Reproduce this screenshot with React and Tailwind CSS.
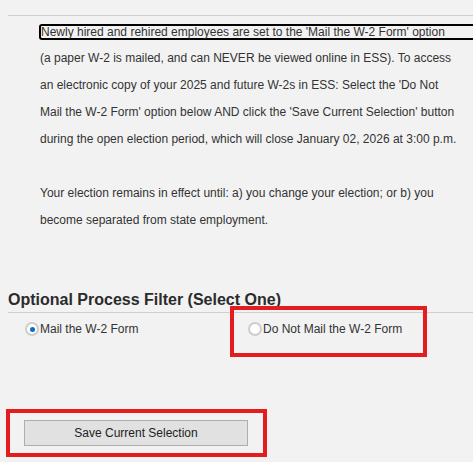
import React from "react";

const lines = [
  "(a paper W-2 is mailed, and can NEVER be viewed online in ESS). To access",
  "an electronic copy of your 2025 and future W-2s in ESS: Select the 'Do Not",
  "Mail the W-2 Form' option below AND click the 'Save Current Selection' button",
  "during the open election period, which will close January 02, 2026 at 3:00 p.m.",
  "",
  "Your election remains in effect until: a) you change your election; or b) you",
  "become separated from state employment.",
];

const Radio = ({ checked }) => (
  <span className="flex items-center justify-center w-[14px] h-[14px] rounded-full border-2 border-[#cdcdcd] bg-white shrink-0">
    {checked && <span className="w-[5px] h-[5px] rounded-full bg-[#0a6cc2]" />}
  </span>
);

const App = () => {
  return (
    <div className="relative w-[473px] h-[462px] overflow-hidden bg-[#f2f2f2] text-[#333] font-['Liberation_Sans',Arial,sans-serif]">
      <div className="ml-[8px] mt-[15px] border-t border-[#cfcfcf]">
        <div className="pt-[2px] pl-[31px] text-[12px]">
          <div className="h-[27px] pt-[6px]">
            <div className="w-[450px] h-[16px] border-2 border-black rounded-[3px] leading-[12px] whitespace-nowrap">
              Newly hired and rehired employees are set to the 'Mail the W-2 Form' option
            </div>
          </div>
          {lines.map((l, i) => (
            <div key={i} className="h-[27px] leading-[27px] pl-[1px] whitespace-nowrap">
              {l}
            </div>
          ))}
        </div>
      </div>

      <div className="ml-[8px] mt-[56px]">
        <h2 className="text-[16px] leading-[20px] font-bold text-[#2b2b2b] pb-[2px] border-b border-[#cfcfcf]">
          Optional Process Filter (Select One)
        </h2>
        <div className="flex items-center h-[32px] pl-[17px] text-[12px]">
          <label className="flex items-center gap-[1px] w-[223px]">
            <Radio checked />
            <span>Mail the W-2 Form</span>
          </label>
          <label className="flex items-center gap-[1px]">
            <Radio />
            <span>Do Not Mail the W-2 Form</span>
          </label>
        </div>
        <button className="ml-[16px] mt-[75px] w-[224px] h-[26px] bg-[#e1e1e1] border border-[#adadad] text-[12px] text-[#222]">
          Save Current Selection
        </button>
      </div>

      <div className="absolute left-[230px] top-[306px] w-[197px] h-[51px] border-4 border-[#e31d1d]" />
      <div className="absolute left-[6px] top-[409px] w-[261px] h-[48px] border-4 border-[#e31d1d]" />
    </div>
  );
};

export default App;
